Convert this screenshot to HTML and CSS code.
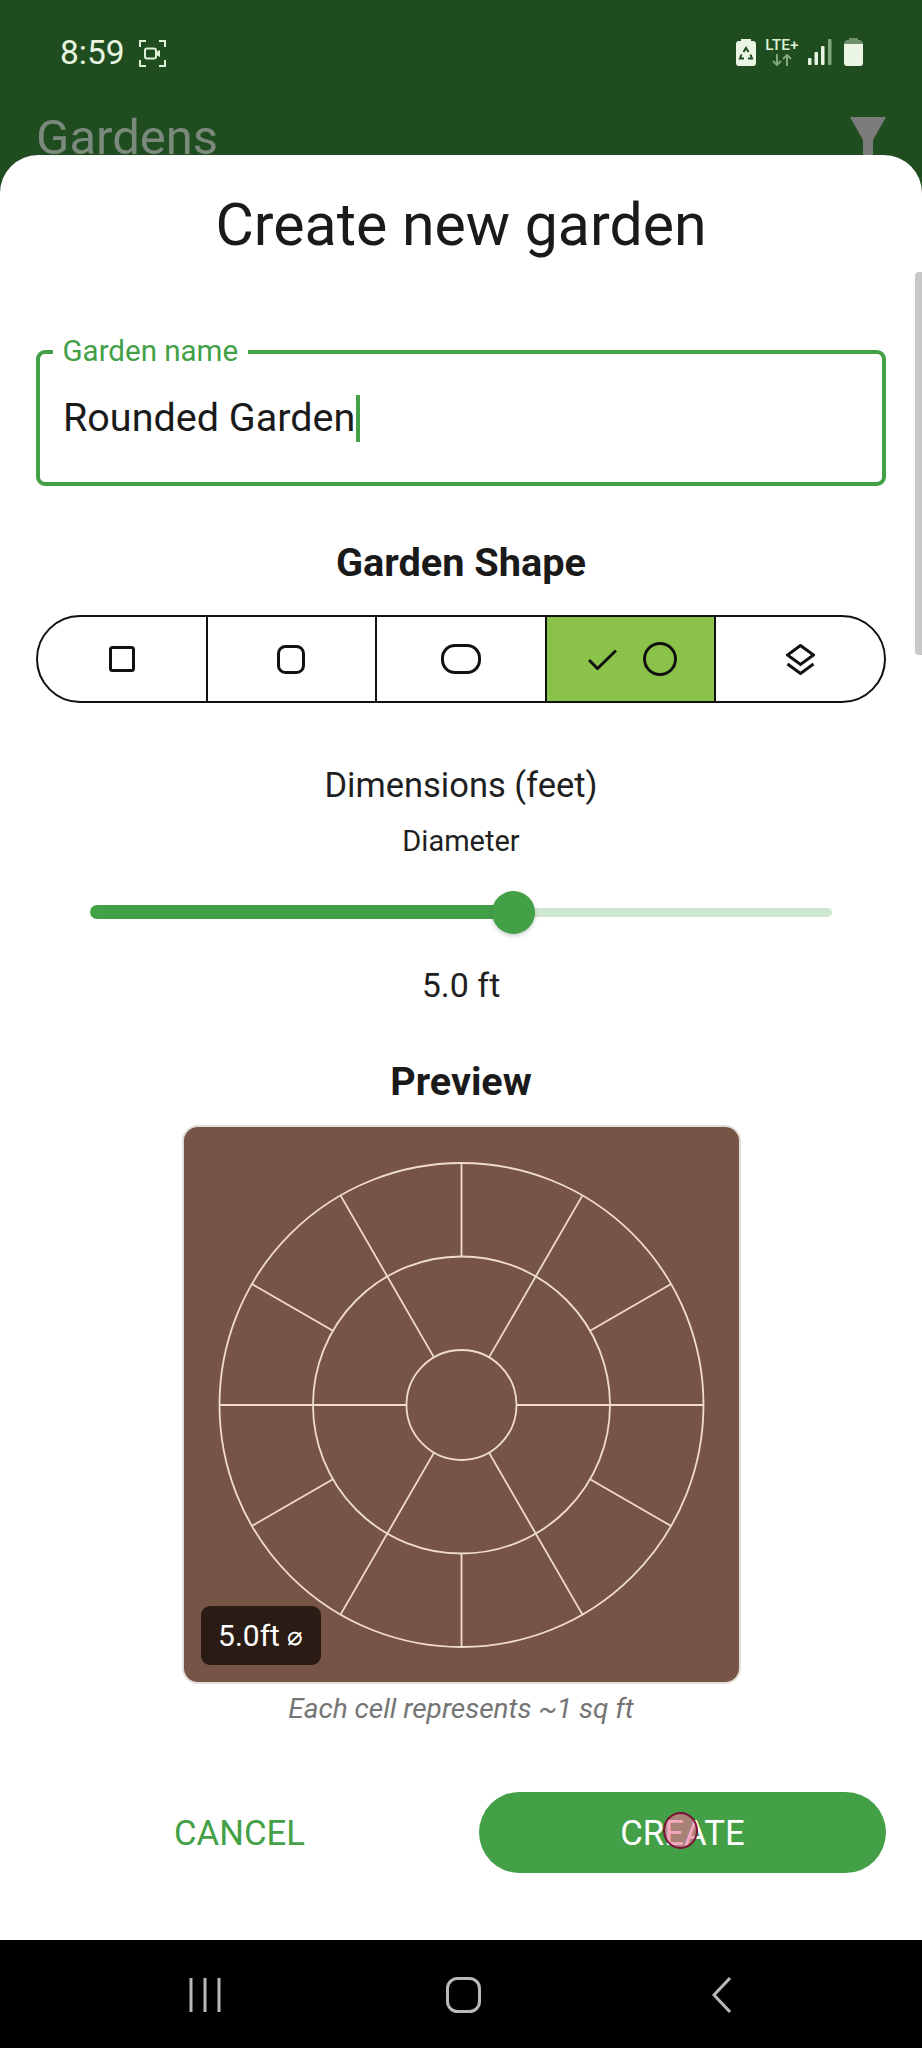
FILE: index.html
```html
<!DOCTYPE html>
<html lang="en">
<head>
<meta charset="utf-8">
<title>Create new garden</title>
<link rel="stylesheet" href="styles.css">
</head>
<body>
<div class="phone">
  <header class="top">
    <div class="status">
      <div class="status-left">
        <span class="time">8:59</span>
        <svg class="rec" viewBox="0 0 27 27" fill="none" stroke="#dff0d8" stroke-width="2">
          <path d="M1 7V1H7M20 1H26V7M1 20V26H7M20 26H26V20"/>
          <rect x="6" y="8.500" width="11" height="10" rx="2"/>
          <path d="M17 12L21 10V17L17 15" fill="#dff0d8" stroke="none"/>
        </svg>
      </div>
      <div class="status-right">
        <svg class="sb-recycle" viewBox="0 0 20 27">
          <path d="M5 0H15V2H17Q20 2 20 5V24Q20 27 17 27H3Q0 27 0 24V5Q0 2 3 2H5Z" fill="#eaf5e4"/>
          <path d="M7.500 13L10 9L12.500 13M14.500 15.500L16 19.500H12M8 19.500H4L5.500 15.500" fill="none" stroke="#1f4d20" stroke-width="2"/>
        </svg>
        <div class="lte">
          <span class="lte-text">LTE+</span>
          <svg class="lte-arrows" viewBox="0 0 20 12" fill="none" stroke="#7fa87f" stroke-width="2">
            <path d="M5 0V11M1 7L5 11L9 7M15 12V1M11 5L15 1L19 5"/>
          </svg>
        </div>
        <svg class="sb-signal" viewBox="0 0 24 26">
          <rect x="0" y="19" width="3.500" height="7" rx="1" fill="#eaf5e4"/>
          <rect x="6.500" y="13" width="3.500" height="13" rx="1" fill="#eaf5e4"/>
          <rect x="13" y="7" width="3.500" height="19" rx="1" fill="#eaf5e4"/>
          <rect x="20" y="0" width="3.500" height="26" rx="1" fill="#7fa87f"/>
        </svg>
        <svg class="sb-battery" viewBox="0 0 19 28">
          <rect x="0" y="4" width="19" height="24" rx="3" fill="#eaf5e4"/>
          <path d="M5 0H14V2H16Q18 2 19 6H0Q1 2 3 2H5Z" fill="#6f8f6f"/>
        </svg>
      </div>
    </div>
    <div class="appbar">
      <span class="app-title">Gardens</span>
      <svg class="funnel" viewBox="0 0 36 40"><path d="M0 0H36L23 23V40H13V23Z" fill="#7c7c7c"/></svg>
    </div>
  </header>

  <main class="sheet">
    <h1 class="title">Create new garden</h1>

    <div class="field">
      <span class="field-label">Garden name</span>
      <span class="field-value">Rounded Garden</span><span class="caret"></span>
    </div>

    <h2 class="heading shape-heading">Garden Shape</h2>

    <div class="segments">
      <div class="seg">
        <svg class="i-square" viewBox="0 0 26 26"><rect x="1.500" y="1.500" width="23" height="23" rx="2"/></svg>
      </div>
      <div class="seg">
        <svg class="i-rounded" viewBox="0 0 28 29"><rect x="1.500" y="1.500" width="25" height="26" rx="7"/></svg>
      </div>
      <div class="seg">
        <svg class="i-pill" viewBox="0 0 40 30"><rect x="1.500" y="1.500" width="37" height="27" rx="12.500"/></svg>
      </div>
      <div class="seg seg-active">
        <svg class="i-check" viewBox="0 0 29 21"><path d="M1 11L9.500 19.500L28 1.500"/></svg>
        <svg class="i-circle" viewBox="0 0 34 34"><circle cx="17" cy="17" r="15.500"/></svg>
      </div>
      <div class="seg">
        <svg class="i-layers" viewBox="0 0 29 31"><path d="M14.500 1.500L27.500 11L14.500 20.500L1.500 11ZM1.500 20L14.500 29.500L27.500 20"/></svg>
      </div>
    </div>

    <div class="dim-title">Dimensions (feet)</div>
    <div class="dim-sub">Diameter</div>

    <div class="slider">
      <div class="track-on"></div>
      <div class="track-off"></div>
      <div class="thumb"></div>
    </div>

    <div class="dim-value">5.0 ft</div>

    <h2 class="heading preview-heading">Preview</h2>

    <div class="preview">
      <svg class="plan" viewBox="0 0 555 555" fill="none">
        <g transform="translate(277.500 278)">
          <circle r="242"/>
          <circle r="148.500"/>
          <circle r="55"/>
          <line x1="55" x2="242"/>
          <line x1="55" x2="242" transform="rotate(60)"/>
          <line x1="55" x2="242" transform="rotate(120)"/>
          <line x1="55" x2="242" transform="rotate(180)"/>
          <line x1="55" x2="242" transform="rotate(240)"/>
          <line x1="55" x2="242" transform="rotate(300)"/>
          <line x1="148.500" x2="242" transform="rotate(30)"/>
          <line x1="148.500" x2="242" transform="rotate(90)"/>
          <line x1="148.500" x2="242" transform="rotate(150)"/>
          <line x1="148.500" x2="242" transform="rotate(210)"/>
          <line x1="148.500" x2="242" transform="rotate(270)"/>
          <line x1="148.500" x2="242" transform="rotate(330)"/>
        </g>
      </svg>
      <div class="badge"><span>5.0ft</span><span class="badge-sym">⌀</span></div>
    </div>

    <p class="caption">Each cell represents ~1 sq ft</p>

    <div class="actions">
      <div class="btn btn-text">CANCEL</div>
      <div class="btn btn-fill">CREATE<span class="touch"></span></div>
    </div>
  </main>

  <nav class="navbar">
    <svg class="nav-recents" viewBox="0 0 32 36"><path d="M2 1V35M16 1V35M30 1V35"/></svg>
    <svg class="nav-home" viewBox="0 0 35 36"><rect x="1.500" y="1.500" width="32" height="33" rx="10"/></svg>
    <svg class="nav-back" viewBox="0 0 19 36"><path d="M18 1L2 18L18 35"/></svg>
  </nav>
</div>
</body>
</html>
```
FILE: styles.css
```css
* { box-sizing: border-box; }
html, body { margin: 0; padding: 0; }
body { font-family: Roboto, "Liberation Sans", sans-serif; color: #1a1a1a; background: #1f4d20; }
.phone { width: 922px; height: 2048px; display: flex; flex-direction: column; overflow: hidden; background: #1f4d20; }

.top { height: 155px; flex: none; padding: 38px 36px 0; }
.status { display: flex; justify-content: space-between; align-items: flex-start; height: 30px; }
.status-left { display: flex; align-items: center; gap: 14px; padding-left: 24px; height: 30px; }
.time { font-size: 33.500px; line-height: 30px; color: #e8f5e0; }
.rec { width: 27px; height: 27px; }
.status-right { display: flex; align-items: flex-start; gap: 9px; margin-right: 23px; }
.sb-recycle { width: 20px; height: 27px; margin-top: 1px; }
.lte { width: 34px; display: flex; flex-direction: column; align-items: center; }
.lte-text { font-size: 15.500px; line-height: 14px; font-weight: 500; color: #dff0d8; }
.lte-arrows { width: 20px; height: 12px; margin-top: 2px; }
.sb-signal { width: 24px; height: 26px; margin-top: 1px; }
.sb-battery { width: 19px; height: 28px; margin-left: 3px; }

.appbar { display: flex; justify-content: space-between; align-items: flex-start; margin-top: 43px; }
.app-title { font-size: 49px; line-height: 54px; color: #7b887c; }
.funnel { width: 36px; height: 40px; margin-top: 6px; }

.sheet { position: relative; z-index: 1; flex: 1; background: #fff; border-radius: 38px 38px 0 0; padding: 35px 36px 0; }
.sheet::after { content: ""; position: absolute; right: 0; top: 117px; width: 7px; height: 383px; background: #c8c8c8; border-radius: 4px 0 0 4px; }

.title { margin: 0; height: 70px; font-size: 59px; line-height: 70px; font-weight: 400; text-align: center; color: #1a1a1a; }

.field { position: relative; margin-top: 90px; height: 136px; border: 4px solid #43a047; border-radius: 9px; padding-left: 23px; display: flex; align-items: center; }
.field-label { position: absolute; left: 13px; top: -18px; background: #fff; padding: 0 9.500px; font-size: 29.500px; line-height: 30px; color: #43a047; }
.field-value { font-size: 39.500px; line-height: 48px; color: #1a1a1a; }
.caret { width: 4px; height: 47px; background: #43a047; margin-left: 1px; }

.heading { margin: 0; font-weight: 700; text-align: center; color: #1a1a1a; }
.shape-heading { margin-top: 53px; font-size: 39.700px; line-height: 48px; }
.preview-heading { margin-top: 55px; font-size: 39.500px; line-height: 44px; }

.segments { margin-top: 28px; height: 88px; border: 2.500px solid #111; border-radius: 44px; display: flex; overflow: hidden; }
.seg { flex: 1; display: flex; align-items: center; justify-content: center; border-right: 2px solid #111; }
.seg:last-child { border-right: 0; }
.seg svg { fill: none; stroke: #111; stroke-width: 3; display: block; }
.seg-active { background: #8bc34a; gap: 26px; }
.i-square { width: 26px; height: 26px; }
.i-rounded { width: 28px; height: 29px; }
.i-pill { width: 40px; height: 30px; }
.i-check { width: 29px; height: 21px; margin-left: 4px; }
.i-circle { width: 34px; height: 34px; }
.i-layers { width: 29px; height: 31px; }

.dim-title { margin-top: 62px; font-size: 34.500px; line-height: 40px; text-align: center; color: #1f1f1f; }
.dim-sub { margin-top: 18px; font-size: 29px; line-height: 36px; text-align: center; color: #1f1f1f; }

.slider { position: relative; margin: 23px 18px 0; padding: 0 36px; height: 60px; display: flex; align-items: center; }
.track-on { width: 424px; height: 14px; background: #43a047; border-radius: 7px 0 0 7px; }
.track-off { flex: 1; height: 9px; background: #cfe6d0; border-radius: 0 5px 5px 0; }
.thumb { position: absolute; left: 437.500px; top: 8.500px; width: 43px; height: 43px; border-radius: 50%; background: #43a047; box-shadow: 0 2px 4px rgba(0,0,0,.2); }

.dim-value { margin-top: 23px; font-size: 34px; line-height: 40px; text-align: center; color: #1f1f1f; }

.preview { position: relative; width: 559px; height: 559px; margin: 21px auto 0; background: #765546; border: 2px solid #e3dedb; border-radius: 16px; overflow: hidden; }
.plan { display: block; width: 555px; height: 555px; stroke-width: 1.800; }
.plan circle, .plan line { stroke: #f0dccb; }
.badge { position: absolute; left: 17px; bottom: 17px; width: 120px; height: 59px; background: #2a1c15; border-radius: 9px; display: flex; align-items: center; justify-content: center; gap: 7px; color: #fff; font-size: 30px; }
.badge-sym { font-size: 26px; }

.caption { margin: 10px 0 0; font-size: 28px; line-height: 30px; font-style: italic; text-align: center; color: #757575; }

.actions { margin-top: 68px; height: 81px; display: flex; gap: 36px; }
.btn { flex: 1; border-radius: 41px; display: flex; align-items: center; justify-content: center; font-size: 34.700px; position: relative; }
.btn-text { color: #43a047; }
.btn-fill { background: #43a047; color: #fff; }
.touch { position: absolute; left: 184px; top: 20px; width: 35px; height: 37px; border-radius: 50%; background: rgba(236,110,150,.6); border: 2.500px solid #7a1035; }

.navbar { flex: none; height: 108px; background: #000; display: flex; position: relative; align-items: center; padding: 0 0 1px; }
.navbar svg { fill: none; stroke: #b9b9b9; stroke-width: 3; position: absolute; top: 37px; height: 36px; }
.nav-recents { left: 189px; width: 32px; }
.nav-home { left: 446px; width: 35px; }
.nav-back { left: 712px; width: 19px; }
```
